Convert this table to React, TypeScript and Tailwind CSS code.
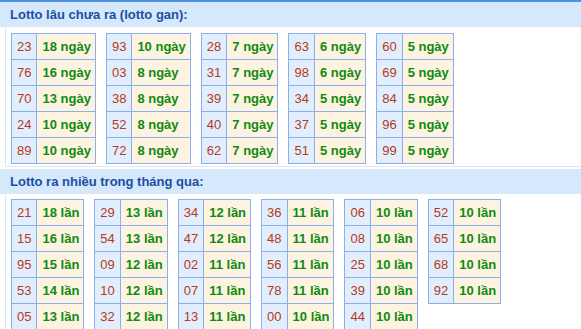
const ganData: [string, number][][] = [
  [["23", 18], ["76", 16], ["70", 13], ["24", 10], ["89", 10]],
  [["93", 10], ["03", 8], ["38", 8], ["52", 8], ["72", 8]],
  [["28", 7], ["31", 7], ["39", 7], ["40", 7], ["62", 7]],
  [["63", 6], ["98", 6], ["34", 5], ["37", 5], ["51", 5]],
  [["60", 5], ["69", 5], ["84", 5], ["96", 5], ["99", 5]],
];

const nhieuData: [string, number][][] = [
  [["21", 18], ["15", 16], ["95", 15], ["53", 14], ["05", 13]],
  [["29", 13], ["54", 13], ["09", 12], ["10", 12], ["32", 12]],
  [["34", 12], ["47", 12], ["02", 11], ["07", 11], ["13", 11]],
  [["36", 11], ["48", 11], ["56", 11], ["78", 11], ["00", 10]],
  [["06", 10], ["08", 10], ["25", 10], ["39", 10], ["44", 10]],
  [["52", 10], ["65", 10], ["68", 10], ["92", 10]],
];

const LottoTable = ({ rows, unit }: { rows: [string, number][]; unit: string }) => (
  <table className="border-collapse self-start">
    <tbody>
      {rows.map(([num, count]) => (
        <tr key={num}>
          <td className="h-[26px] border border-[#8cadee] bg-[#e1eefd] px-[5px] text-center text-[13px] text-[#b8391a]">
            {num}
          </td>
          <td className="h-[26px] border border-[#8cadee] bg-[#fdf3e1] pl-[5px] pr-[4px] text-[13px] font-bold text-[#108a10] whitespace-nowrap">
            {count} {unit}
          </td>
        </tr>
      ))}
    </tbody>
  </table>
);

const SectionTitle = ({ title }: { title: string }) => (
  <div className="h-[25px] flex items-center bg-[#d5e8fc] px-[10px] text-[13px] font-bold text-[#1b4fa3]">
    {title}
  </div>
);

export default function App() {
  return (
    <div className="w-[581px] h-[329px] overflow-hidden bg-white border-t-2 border-[#4f93e0] font-['Liberation_Sans',Arial,sans-serif] leading-[15px]">
      <SectionTitle title="Lotto lâu chưa ra (lotto gan):" />
      <div className="ml-[5px] border-l border-b border-[#e2e4e8] pl-[5px] pt-[6px] pb-[2px]">
        <div className="flex gap-[10px]">
          {ganData.map((col, i) => (
            <LottoTable key={i} rows={col} unit="ngày" />
          ))}
        </div>
      </div>
      <div className="mt-[2px]">
        <SectionTitle title="Lotto ra nhiều trong tháng qua:" />
      </div>
      <div className="ml-[5px] border-l border-[#e2e4e8] pl-[5px] pt-[5px]">
        <div className="flex gap-[10px]">
          {nhieuData.map((col, i) => (
            <LottoTable key={i} rows={col} unit="lần" />
          ))}
        </div>
      </div>
    </div>
  );
}
